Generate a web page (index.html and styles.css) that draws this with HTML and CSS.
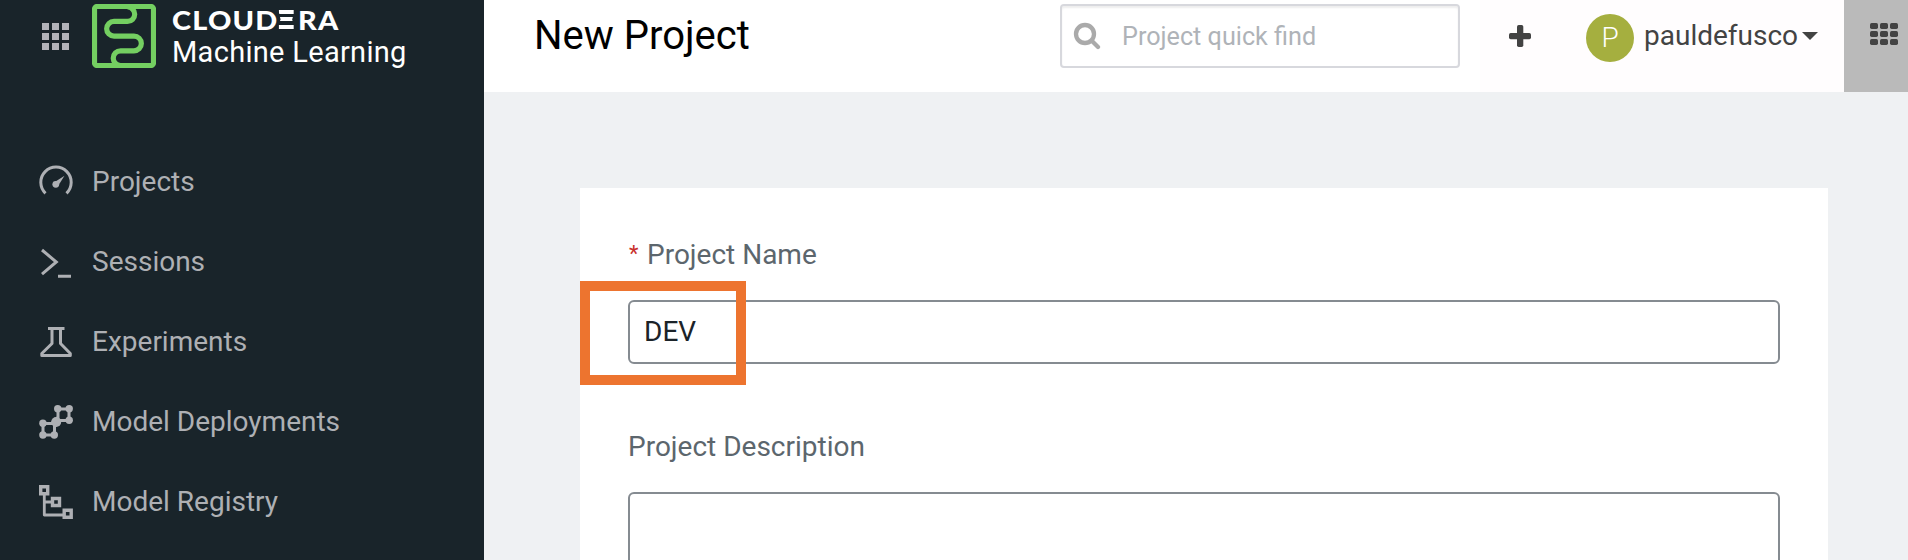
FILE: index.html
```html
<!DOCTYPE html>
<html lang="en">
<head>
<meta charset="utf-8">
<title>New Project</title>
<link rel="stylesheet" href="styles.css">
</head>
<body>
<div class="app">
  <aside class="sidebar">
    <div class="brand">
      <svg class="brand-apps" width="28" height="28" viewBox="0 0 28 28"><path d="M0 0h7v7H0zM10 0h7v7h-7zM20 0h7v7h-7zM0 10h7v7H0zM10 10h7v7h-7zM20 10h7v7h-7zM0 20h7v7H0zM10 20h7v7h-7zM20 20h7v7h-7z"/></svg>
      <svg class="brand-logo" width="64" height="64" viewBox="0 0 64 64"><rect x="2.5" y="2.5" width="59" height="59" rx="2.5"/><path d="M35.5 3a7.2 7.2 0 0 1 0 14.4H22a7.35 7.35 0 0 0 0 14.7h20a7.35 7.35 0 0 1 0 14.7H28.600a7.2 7.2 0 0 0 0 14.700"/></svg>
      <div class="brand-text">
        <div class="brand-name">CLOUD<span class="brand-e">E</span>RA</div>
        <div class="brand-product">Machine Learning</div>
      </div>
    </div>
    <nav class="nav">
      <a class="nav-item"><svg class="icon" viewBox="0 0 36 36"><path d="M9.500 30.300A15.200 15.200 0 1 1 30.500 30.300" transform="translate(-2 -1)"/><circle class="fill" cx="17.800" cy="20.300" r="3.400"/><path class="fill" d="M16 18.500L26.500 11.700 20 22z"/></svg><span>Projects</span></a>
      <a class="nav-item"><svg class="icon" viewBox="0 0 36 36"><path d="M4 6l14.300 12L4 30.200M20 32.300h13"/></svg><span>Sessions</span></a>
      <a class="nav-item"><svg class="icon" viewBox="0 0 36 36"><path d="M10 4.500h16.500M14 5v14.500L3.800 29.500v2h28.500v-2L22.500 19.500V5" stroke-linejoin="round"/></svg><span>Experiments</span></a>
      <a class="nav-item"><svg class="icon" viewBox="0 0 36 36"><path d="M20 5h11v11.500H20zM5 19.500h11.500V31H5z"/><path d="M15 21l6-6" stroke-width="7"/><g class="fill"><circle cx="19.700" cy="4.800" r="3.700"/><circle cx="31.200" cy="4.800" r="3.700"/><circle cx="31.200" cy="16.300" r="3.700"/><circle cx="18.200" cy="18" r="5"/><circle cx="4.900" cy="19.300" r="3.700"/><circle cx="4.900" cy="31" r="3.700"/><circle cx="16.300" cy="31" r="3.700"/></g></svg><span>Model Deployments</span></a>
      <a class="nav-item"><svg class="icon" viewBox="0 0 36 36"><path d="M2.700 2.700h7v7h-7zM14.500 14.500h7v7h-7zM26.200 26.200h7v7h-7z" stroke-width="3.400"/><path d="M6.300 10v21H25M6.300 18H14" stroke-width="2.800" stroke-linejoin="round"/></svg><span>Model Registry</span></a>
    </nav>
  </aside>
  <main class="main">
    <header class="topbar">
      <h1 class="title">New Project</h1>
      <div class="search">
        <svg width="28" height="28" viewBox="0 0 28 28"><circle cx="12" cy="12" r="9"/><path d="M19 19l6 6"/></svg>
        <span>Project quick find</span>
      </div>
      <div class="user">
        <svg class="plus" width="22" height="22" viewBox="0 0 22 22"><rect y="8" width="22" height="6.300" rx="1.700"/><rect x="8" width="6.300" height="22" rx="1.700"/></svg>
        <div class="avatar">P</div>
        <span class="username">pauldefusco</span>
        <svg class="caret" width="16" height="8" viewBox="0 0 16 8"><path d="M0 0h16L8 8z"/></svg>
      </div>
      <div class="switcher">
        <svg width="28" height="22" viewBox="0 0 28 22"><g id="row"><rect width="8" height="6" rx="1.700"/><rect x="10" width="8" height="6" rx="1.700"/><rect x="20" width="8" height="6" rx="1.700"/></g><use href="#row" y="8"/><use href="#row" y="16"/></svg>
      </div>
    </header>
    <section class="card">
      <div class="label"><span class="required">*</span><span>Project Name</span></div>
      <div class="field"><div class="input">DEV</div><div class="highlight"></div></div>
      <div class="label">Project Description</div>
      <div class="input textarea"></div>
    </section>
  </main>
</div>
</body>
</html>
```
FILE: styles.css
```css
* { box-sizing: border-box; }
body { margin: 0; font-family: Roboto, "Liberation Sans", sans-serif; }
svg { display: block; flex: none; }
.app { display: flex; width: 1908px; height: 560px; overflow: hidden; }

.sidebar { width: 484px; flex: none; background: #19242a; color: #aeb0b4; }
.brand { display: flex; height: 142px; padding: 4px 0 0 42px; }
.brand-apps { margin: 19px 22px 0 0; fill: #b2b3b9; }
.brand-logo { fill: none; stroke: #74cf61; stroke-width: 5.200; }
.brand-text { margin-left: 16px; color: #fff; white-space: nowrap; }
.brand-name { width: 160px; height: 32px; font: 900 26.5px/32px Lato, sans-serif; letter-spacing: 1.1px; transform: scaleX(1.09); transform-origin: left; }
.brand-e { display: inline-block; height: 19px; width: 14px; margin-right: 4px; font-size: 16px; letter-spacing: 0; line-height: 19px; vertical-align: 4px; color: transparent; background: linear-gradient(#fff 4px, transparent 4px 7.500px, #fff 7.500px 11.500px, transparent 11.500px 15px, #fff 15px); clip-path: polygon(0 0, 100% 0, 100% 22%, 90% 50%, 100% 78%, 100% 100%, 0 100%, 0 78%, 14% 50%); }
.brand-product { height: 32px; font-size: 29px; line-height: 32px; letter-spacing: .3px; }
.nav-item { display: flex; align-items: center; height: 80px; padding-left: 38px; font-size: 28px; }
.nav-item span { margin-top: -2px; }
.icon { width: 36px; height: 36px; margin-right: 18px; fill: none; stroke: #aeb0b4; stroke-width: 3; }
.icon .fill { fill: #aeb0b4; stroke: none; }

.main { flex: 1; background: #eff1f3; }
.topbar { display: flex; height: 92px; background: #fff; }
.title { width: 576px; margin: 0; padding-left: 50px; font-size: 40px; font-weight: 400; line-height: 72px; color: #000; }
.search { display: flex; align-items: center; width: 400px; height: 64px; margin: 4px 20px 0 0; padding-left: 11px; border: 2px solid #d7d8dd; border-radius: 4px; box-shadow: inset 0 2px 2px rgba(0,0,0,.07); font-size: 25.200px; color: #afb3b8; }
.search svg { fill: none; stroke: #aaa; stroke-width: 4.300; stroke-linecap: round; }
.search span { margin: 0 0 0 21px; }
.user { display: flex; width: 364px; padding-left: 29px; background: #fffdfe; color: #434343; }
.plus { margin-top: 25px; fill: #434343; }
.avatar { width: 48px; height: 48px; margin: 14px 10px 0 55px; border-radius: 50%; background: #a5af3f; color: #fff; font-size: 28px; font-weight: 300; line-height: 48px; text-align: center; }
.username { font-size: 28px; line-height: 72px; }
.caret { margin: 32px 0 0 4px; fill: #434343; }
.switcher { width: 64px; padding: 23px 0 0 26px; background: #bababa; fill: #434343; }

.card { width: 1248px; height: 372px; margin: 96px 0 0 96px; padding: 48px; background: #fff; }
.label { display: flex; height: 64px; font-size: 28px; line-height: 38px; color: #5c666d; }
.required { width: 18px; margin-left: 1px; font-size: 22px; line-height: 35px; color: #c9302c; }
.field { position: relative; height: 128px; }
.input { height: 64px; padding-left: 14px; border: 2px solid #858b91; border-radius: 6px; font-size: 28px; line-height: 59px; color: #1b2329; }
.textarea { height: 120px; }
.highlight { position: absolute; left: -48px; top: -19px; width: 166px; height: 104px; border: 10px solid #ed742f; }
```
